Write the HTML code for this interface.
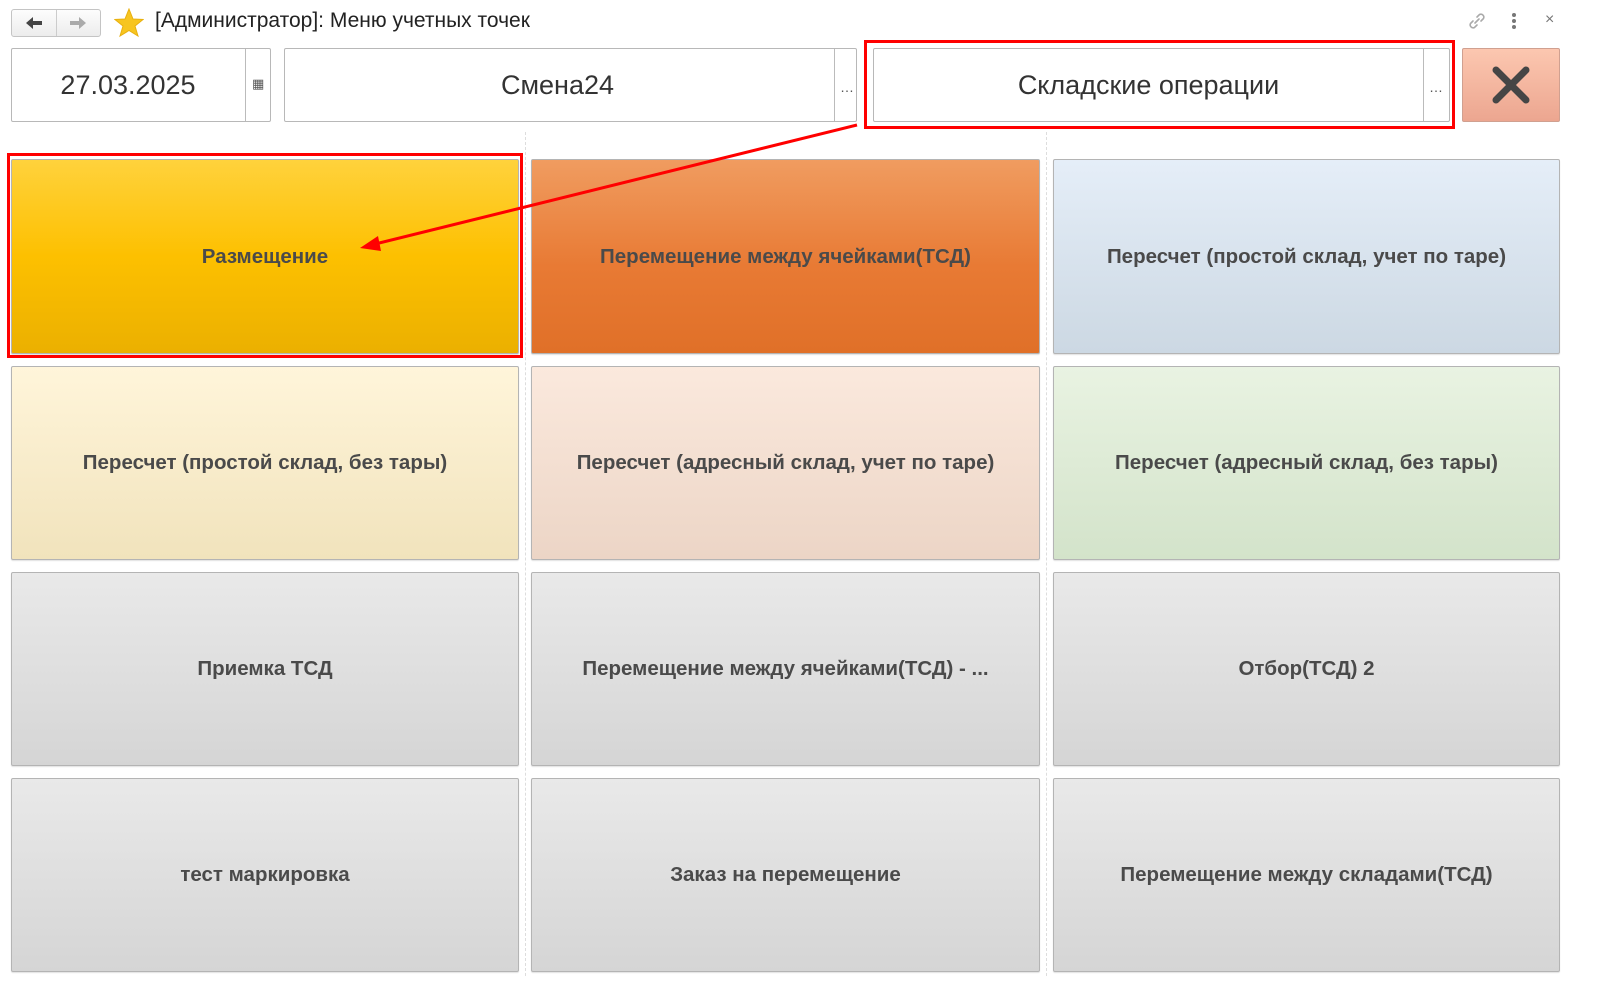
<!DOCTYPE html>
<html><head><meta charset="utf-8"><style>
body{margin:0;width:1597px;height:996px;background:#fff;position:relative;overflow:hidden;font-family:"Liberation Sans","DejaVu Sans",sans-serif;}
.a{position:absolute;box-sizing:border-box}
.fld{border:1px solid #b8b8b8;border-radius:2px;background:#fff;font-size:27px;color:#333;display:flex;align-items:center;justify-content:center}
.sep{position:absolute;top:0;bottom:0;width:1px;background:#bbb}
.b{position:absolute;box-sizing:border-box;border:1px solid #b4b4b4;border-radius:2px;display:flex;align-items:center;justify-content:center;font-weight:bold;font-size:20.5px;color:#4a4a4a;box-shadow:0 1px 1px rgba(0,0,0,.12)}
.g{background:linear-gradient(#e9e9e9,#d5d5d5)}
.vl{position:absolute;top:132px;bottom:20px;width:0;border-left:1px dashed #ddd}
</style></head><body>
<div class="a" style="left:11px;top:9px;width:90px;height:28px;border:1px solid #c4c4c4;border-radius:3px;background:linear-gradient(#fdfdfd,#ececec)"></div>
<div class="a" style="left:56px;top:10px;width:1px;height:26px;background:#ccc"></div>
<svg class="a" style="left:24px;top:14px" width="20" height="18" viewBox="0 0 20 18"><path d="M2 9L9 3V7H18V11H9V15Z" fill="#444"/></svg>
<svg class="a" style="left:68px;top:14px" width="20" height="18" viewBox="0 0 20 18"><path d="M18 9L11 3V7H2V11H11V15Z" fill="#aaa"/></svg>
<svg class="a" style="left:114px;top:8px" width="30" height="30" viewBox="0 0 30 30"><polygon points="15,1 19,11 29,11.5 21,18 24,28 15,22.5 6,28 9,18 1,11.5 11,11" fill="#f7c520" stroke="#e8b010" stroke-width="1"/></svg>
<div class="a" style="left:155px;top:9px;font-size:21px;color:#222">[Администратор]: Меню учетных точек</div>
<svg class="a" style="left:1467px;top:11px" width="20" height="20" viewBox="0 0 20 20"><path d="M8 12L12 8M6 10L3.5 12.5a3 3 0 0 0 4 4L10 14M10 6L12.5 3.5a3 3 0 0 1 4 4L14 10" stroke="#aaa" stroke-width="1.6" fill="none" stroke-linecap="round"/></svg>
<svg class="a" style="left:1510px;top:12px" width="8" height="18"><circle cx="4" cy="3" r="2" fill="#777"/><circle cx="4" cy="9" r="2" fill="#777"/><circle cx="4" cy="15" r="2" fill="#777"/></svg>
<div class="a" style="left:1545px;top:11px;font-size:16px;color:#777">×</div>

<div class="a fld" style="left:11px;top:48px;width:260px;height:74px;padding-right:26px">27.03.2025<div class="sep" style="left:233px"></div><div class="a" style="left:240px;top:27px;font-size:13px;color:#555">▦</div></div>
<div class="a fld" style="left:284px;top:48px;width:573px;height:74px;padding-right:26px">Смена24<div class="sep" style="left:549px"></div><div class="a" style="left:555px;top:30px;font-size:14px;color:#555">…</div></div>
<div class="a fld" style="left:873px;top:48px;width:577px;height:74px;padding-right:26px">Складские операции<div class="sep" style="left:549px"></div><div class="a" style="left:555px;top:30px;font-size:14px;color:#555">…</div></div>
<div class="a" style="left:1462px;top:48px;width:98px;height:74px;border:1px solid #d0a090;border-radius:2px;background:linear-gradient(#fcc7b0,#eca690)"></div>
<svg class="a" style="left:1490px;top:64px" width="42" height="42" viewBox="0 0 42 42"><path d="M6 6L36 36M36 6L6 36" stroke="#454545" stroke-width="7" stroke-linecap="round"/></svg>

<div class="vl" style="left:525px"></div><div class="vl" style="left:1046px"></div>

<div class="b" style="left:11px;top:159px;width:508px;height:195px;background:linear-gradient(#ffd23c,#fdc000 50%,#ebb000)">Размещение</div>
<div class="b" style="left:531px;top:159px;width:509px;height:195px;background:linear-gradient(#f09c60,#e87a34 55%,#e07028)">Перемещение между ячейками(ТСД)</div>
<div class="b" style="left:1053px;top:159px;width:507px;height:195px;background:linear-gradient(#e5eef8,#ccd8e3)">Пересчет (простой склад, учет по таре)</div>
<div class="b" style="left:11px;top:366px;width:508px;height:194px;background:linear-gradient(#fff5da,#f1e3bc)">Пересчет (простой склад, без тары)</div>
<div class="b" style="left:531px;top:366px;width:509px;height:194px;background:linear-gradient(#fbe9dd,#ecd5c6)">Пересчет (адресный склад, учет по таре)</div>
<div class="b" style="left:1053px;top:366px;width:507px;height:194px;background:linear-gradient(#e9f3e2,#d3e3ca)">Пересчет (адресный склад, без тары)</div>
<div class="b g" style="left:11px;top:572px;width:508px;height:194px">Приемка ТСД</div>
<div class="b g" style="left:531px;top:572px;width:509px;height:194px">Перемещение между ячейками(ТСД) - ...</div>
<div class="b g" style="left:1053px;top:572px;width:507px;height:194px">Отбор(ТСД) 2</div>
<div class="b g" style="left:11px;top:778px;width:508px;height:194px">тест маркировка</div>
<div class="b g" style="left:531px;top:778px;width:509px;height:194px">Заказ на перемещение</div>
<div class="b g" style="left:1053px;top:778px;width:507px;height:194px">Перемещение между складами(ТСД)</div>

<div class="a" style="left:7px;top:153px;width:516px;height:205px;border:3px solid #f00"></div>
<div class="a" style="left:864px;top:40px;width:591px;height:89px;border:3px solid #f00"></div>
<svg class="a" style="left:0;top:0" width="1597" height="996"><line x1="857" y1="125" x2="375" y2="244" stroke="#f00" stroke-width="3"/><polygon points="360,248 378,236 381,251" fill="#f00"/></svg>
</body></html>
